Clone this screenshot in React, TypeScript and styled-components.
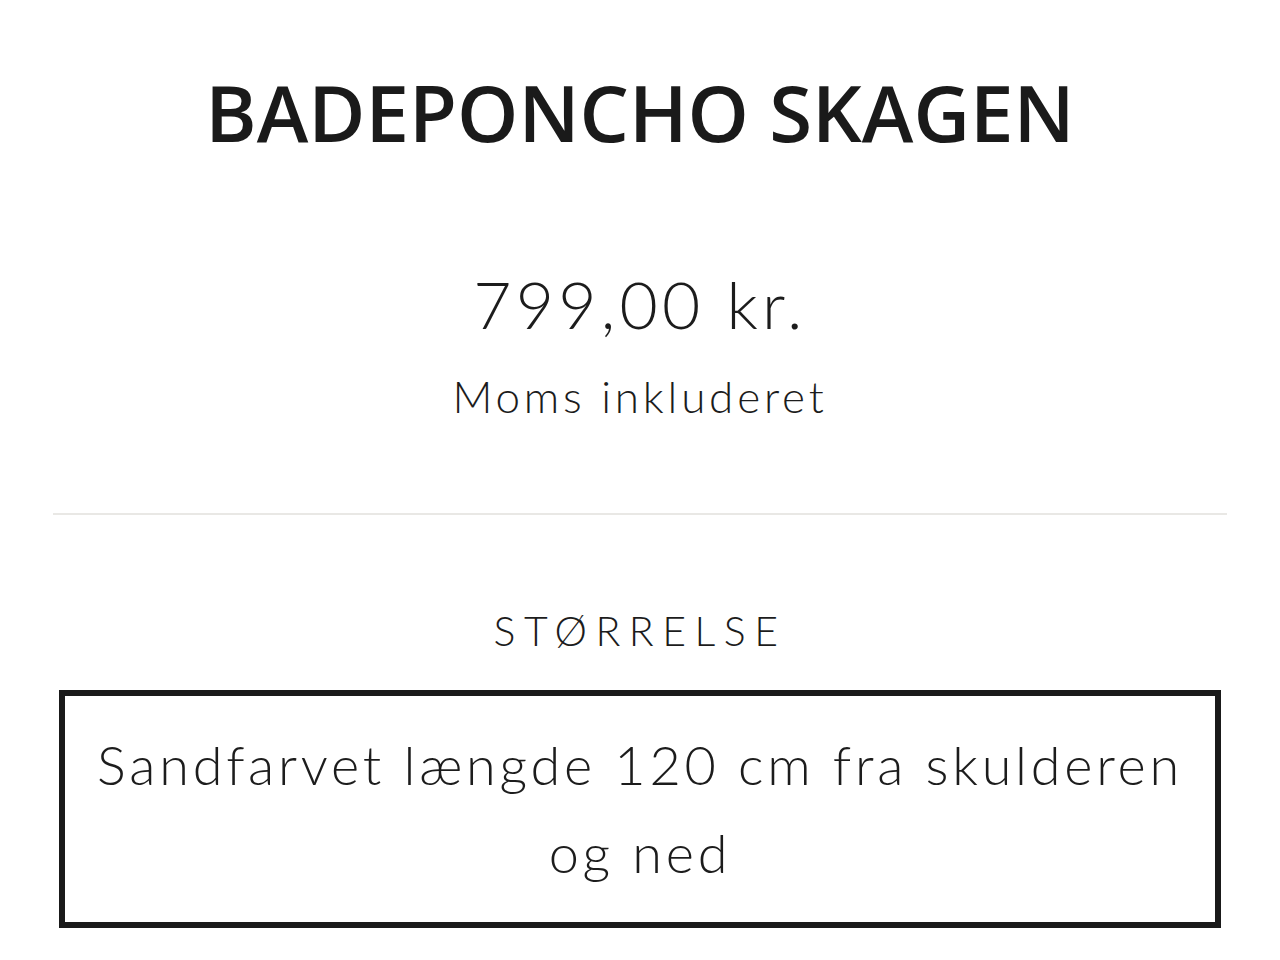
import React from "react"
import styled, { createGlobalStyle } from "styled-components"

const GlobalStyle = createGlobalStyle`
    html, body {
        margin: 0;
        padding: 0;
        background: #fff;
    }
`

const Page = styled.div`
    width: 1280px;
    padding: 0 53px;
    box-sizing: border-box;
    display: flex;
    flex-direction: column;
    align-items: center;
    color: #1c1c1c;
    font-family: Lato, "Liberation Sans", sans-serif;
    font-weight: 300;
`

const Title = styled.h1`
    margin: 62px 0 0;
    font-family: "Open Sans", sans-serif;
    font-weight: 600;
    font-size: 78px;
    line-height: 100px;
    color: #1a1a1a;
`

const Price = styled.div`
    margin-top: 102px;
    font-size: 66px;
    line-height: 80px;
    letter-spacing: 4.2px;
`

const Note = styled.div`
    margin-top: 24px;
    font-size: 44px;
    line-height: 56px;
    letter-spacing: 3.8px;
`

const Divider = styled.hr`
    width: 100%;
    margin: 89px 0 0;
    border: 0;
    height: 2px;
    background: #e9e8e5;
`

const OptionLabel = styled.div`
    margin-top: 91px;
    font-size: 41px;
    line-height: 50px;
    letter-spacing: 8.5px;
    text-transform: uppercase;
`

const OptionBox = styled.div`
    margin: 34px 6px 0;
    align-self: stretch;
    border: 6px solid #1a1a1a;
    padding: 25px 30px 25px;
    text-align: center;
    font-size: 54px;
    line-height: 88px;
    letter-spacing: 3.75px;
`

export default function App() {
    return (
        <>
            <GlobalStyle />
            <Page>
                <Title>BADEPONCHO SKAGEN</Title>
                <Price>799,00 kr.</Price>
                <Note>Moms inkluderet</Note>
                <Divider />
                <OptionLabel>Størrelse</OptionLabel>
                <OptionBox>Sandfarvet længde 120 cm fra skulderen og ned</OptionBox>
            </Page>
        </>
    )
}
